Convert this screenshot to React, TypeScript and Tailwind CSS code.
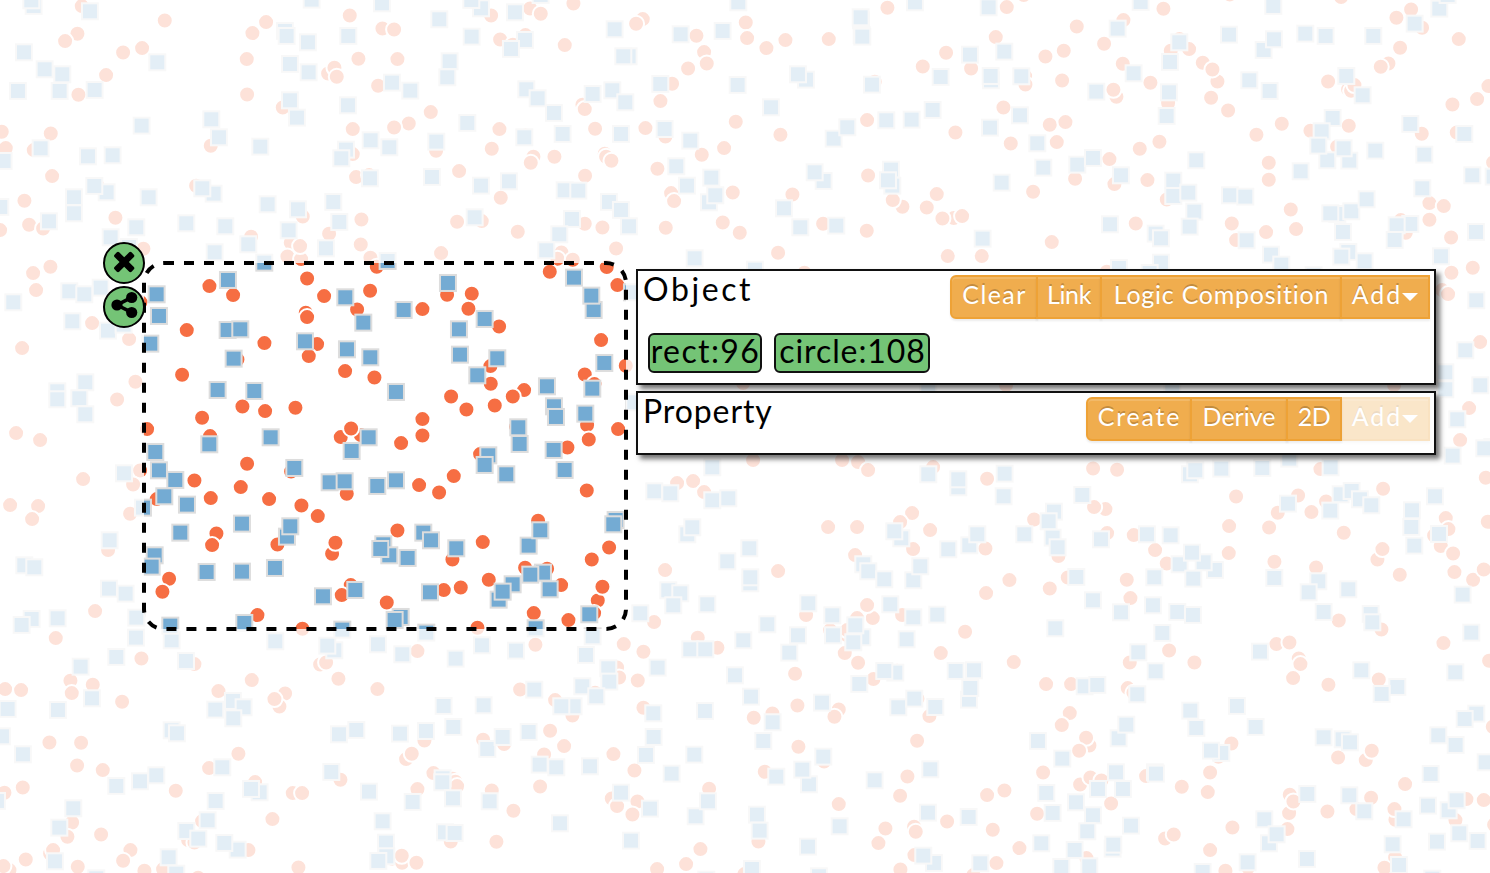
import React from "react";

type Tile = { x: number; y: number; k: number; circles: string; squares: string };

// Marks are grouped by canvas tile: k units per pixel, centre coordinates, painted in order.
const tiles: Tile[] = [
  {
    x: 0, y: 0, k: 3,
    circles:
      "245,18 494,61 232,101 195,123 369,157 426,144 318,225 235,284 757,99 798,66 740,177 741,283 848,322 1049,46 1147,85 1182,88 1075,176 1192,177 984,220 1003,203 1010,230 1134,257 1473,46 1502,118 1292,336 1226,370 1182,382 1058,387 1058,462 1068,531 1107,525 1308,452 1377,513 1475,446 1498,387 1502,593 1371,665 1445,663 5,395 152,400 17,444 101,450 156,528 73,602 87,674 129,685 0,690 346,653 290,553 632,437 588,557 908,649 753,710 987,701 1084,658 1082,733 1111,773 872,728 862,769 903,777 900,738 430,746 1130,800 1323,759 151,800",
    squares:
      "100,17 93,0 269,33 71,156 133,207 186,222 53,272 178,272 283,269 471,186 424,376 633,357 656,411 780,439 263,468 337,465 121,444 10,482 221,591 319,576 282,557 221,639 0,620 146,663 445,591 640,580 606,564 558,669 675,678 408,681 331,711 386,740 802,612 893,627 744,732 643,756 865,690 999,605 1017,665 977,744 934,-2 854,92 859,107 923,126 869,191 925,216 869,300 890,352 1044,107 1043,315 1145,9 1442,24 1413,-1 1317,57 1414,109 1348,183 1341,231 1175,247 1230,271 1401,368 1308,424 1111,420 1167,441 1037,448 1023,474 1109,534 1295,530 1442,556 1423,651 792,787 1162,782",
  },
  {
    x: 500, y: 0, k: 3,
    circles:
      "90,25 122,41 220,10 428,57 408,71 194,135 0,118 76,105 38,134 589,107 612,156 620,190 564,205 516,251 481,303 737,67 741,114 856,120 799,144 986,117 1162,23 1087,47 1268,199 1338,158 1413,205 1487,111 247,314 254,327 285,386 436,384 496,409 76,406 100,470 92,488 163,470 314,461 318,470 334,482 255,527 472,506 605,464 672,444 707,365 841,404 1101,360 1124,245 1366,397 1104,526 513,579 522,603 698,577 877,583 1207,620 1178,600 1310,582 1280,622 1361,654 1327,655 1386,648 668,667 719,698 969,671 1100,692 497,683 307,682 254,671 53,695 348,745 184,757 172,776 218,779 149,815 320,801 834,758 1343,768 1445,768 913,818",
    squares:
      "121,-16 44,36 74,119 32,146 343,87 385,168 369,168 541,102 667,92 714,6 1082,60 1081,51 1084,104 1086,109 1244,6 1465,21 1409,163 1321,230 1472,240 1471,227 78,267 112,294 161,338 277,281 336,270 375,306 187,401 72,411 362,401 480,251 493,386 570,421 712,254 917,238 893,222 812,321 1115,253 1158,360 1234,358 1297,329 1469,382 1000,415 1041,381 528,498 560,556 633,532 26,543 193,570 234,571 326,605 362,629 386,678 215,656 177,702 138,750 626,606 645,585 970,542 943,516 851,624 900,681 1008,676 1172,508 1176,556 1163,540 1447,715 583,774 764,808",
  },
  {
    x: 990, y: 0, k: 3,
    circles:
      "50,21 101,-15 260,79 342,131 166,169 221,152 216,241 105,228 106,253 40,322 179,374 226,366 200,426 62,430 129,575 185,726 255,536 358,477 373,552 398,191 379,290 370,269 481,248 400,60 520,26 719,-17 542,152 568,117 597,147 638,188 682,244 667,208 663,293 714,331 534,309 508,425 449,446 472,540 530,598 437,670 725,670 738,720 828,696 918,687 902,628 836,539 836,488 799,404 875,371 961,392 1076,377 1041,440 1014,244 1074,268 1083,272 1093,255 1195,190 1172,200 1230,143 1219,53 1263,28 1296,83 1406,117 1053,-9 1495,258 1461,297 1387,313 1295,401 1400,397 1509,487 1318,609 1361,618 1318,659 1232,660 1247,698 1383,712 1448,803 1384,818 350,815",
    squares:
      "451,5 382,85 42,154 93,228 89,345 141,429 34,547 159,502 261,493 308,473 392,525 318,274 430,219 567,126 539,185 536,276 529,347 618,480 716,103 820,149 851,117 777,240 838,272 945,100 1006,107 1149,107 849,17 1347,25 1372,-16 1273,70 1068,227 1117,285 1027,353 994,393 1011,480 984,436 1077,481 1060,444 1155,451 931,513 1260,371 1302,463 1422,401 1446,525 1510,529 1296,564 549,541 549,587 594,577 612,634 598,679 719,585 765,589 496,700 512,714 359,672 512,787 386,803 478,818 769,720 842,763 873,793 1041,641 1020,639 1083,633 1129,597 1058,695 1074,755 1053,769 1123,783 1260,671 1219,675 1213,719 1457,695 1352,768 970,825",
  },
  {
    x: 0, y: 620, k: 3,
    circles:
      "167,54 424,115 583,132 211,182 215,219 278,194 15,207 63,210 366,245 148,367 243,368 231,436 308,450 68,502 13,518 216,607 202,650 303,643 150,700 159,690 77,718 28,750 10,738 233,740 391,690 369,722 433,752 489,747 594,773 527,512 627,444 715,401 765,486 878,519 906,519 606,603 564,660 583,667 817,597 745,690 895,742 655,213 755,180 855,220 838,259 823,237 960,133 978,127 1015,176 1132,207 1252,93 907,26 1432,23 1273,361 1218,417 1235,401 1021,479 1252,507 1300,459 1358,476 1366,485 1371,498 1352,664 1449,359 1475,511 1489,665 1177,716 1206,728 1205,707 1249,728",
    squares:
      "94,-4 64,14 172,-6 241,139 348,110 407,52 408,-8 514,60 557,122 275,234 173,269 22,266 5,348 68,402 219,564 177,622 164,723 -10,542 348,497 419,483 468,465 514,330 530,339 645,268 698,242 730,261 699,294 666,441 778,516 752,506 646,542 622,600 558,632 594,655 712,688 672,668 505,711 528,760 288,774 825,63 1002,90 981,76 1133,72 1206,102 1366,115 1445,75 1026,28 1278,37 1330,257 1450,255 1359,320 1277,332 1199,340 1068,329 1016,342 993,455 1106,514 1237,545 1327,474 1326,486 1358,534 1468,543 1461,386 1147,603 1157,667 1158,708 1134,722 1334,636 1363,638",
  },
  {
    x: 500, y: 620, k: 3,
    circles:
      "106,74 462,6 371,72 430,95 593,53 652,83 351,142 357,172 413,181 60,208 165,240 217,286 285,218 430,263 150,332 192,378 132,403 120,499 40,572 12,372 340,402 403,451 335,535 351,558 412,544 397,583 627,506 601,687 558,732 471,747 733,762 761,293 817,280 892,256 885,161 895,380 794,455 972,424 775,664 1016,552 1016,268 1003,290 1034,99 1074,128 990,30 1040,45 1118,-6 1120,177 1191,152 1322,99 1395,35 1252,236 1288,288 1251,362 1222,469 1200,527 1156,625 1135,669 1242,620 1247,635 1341,604 1461,525 1478,629 1243,705 1201,748 1489,729 1420,765",
    squares:
      "277,48 47,91 257,104 106,24 324,144 327,184 246,198 288,228 102,208 220,258 183,258 472,142 459,279 460,350 437,404 85,335 7,350 118,433 168,441 269,438 362,517 449,565 179,609 392,661 570,87 615,87 729,60 704,165 752,229 614,272 582,403 514,460 586,588 623,543 770,583 778,631 755,746 618,778 801,12 893,45 867,97 998,45 1086,51 1059,66 1077,191 1185,157 1152,152 1219,57 1311,-17 1366,152 1421,150 1406,238 1410,203 1194,261 1242,235 1305,260 965,247 817,306 789,362 969,409 828,469 926,492 906,448 1123,480 1290,447 1283,577 1018,618 923,679 1301,728 1269,706 1440,729 1405,590 956,768",
  },
  {
    x: 990, y: 450, k: 3,
    circles:
      "-9,86 -14,295 -12,431 -9,1035 309,55 381,59 738,139 346,177 312,171 132,208 351,249 431,255 495,300 530,340 717,228 716,309 205,318 58,390 233,382 179,415 410,389 421,444 71,636 419,637 537,601 613,637 168,702 243,702 413,714 430,728 239,789 215,825 298,886 288,863 267,902 159,967 270,1003 301,982 334,991 43,1021 141,1091 363,1060 468,978 575,1010 88,1194 289,1224 525,1165 551,1153 660,1200 706,1262 727,1132 653,1026 660,967 685,920 724,880 774,1252 991,57 924,136 863,188 837,232 964,186 1008,154 1179,116 1061,248 853,335 978,352 1162,328 1177,297 1229,374 1367,204 1332,256 1375,237 1352,288 1389,310 1393,366 1449,389 1481,358 1487,83 1493,215 1046,511 1174,538 859,582 898,577 926,625 931,642 909,684 1015,704 1166,688 1360,579 1497,632 1508,830 1044,922 1127,930 1145,902 1245,1002 1143,1043 899,1034 897,1089 910,1054 892,1137 1012,1084 1099,1077 1216,1109 1213,1077 1429,1047 1481,1050 1396,1110 1512,1124 1215,1222 1183,1253",
    squares:
      "43,70 40,138 276,134 191,184 175,213 102,252 187,262 202,291 332,267 258,380 308,450 392,486 195,534 470,252 541,255 568,342 674,359 640,336 605,307 609,385 492,381 488,465 561,485 608,494 516,548 444,606 496,663 283,708 321,704 441,732 599,72 615,60 693,55 816,53 897,25 1021,51 893,160 1051,132 1084,122 1109,147 1143,165 1020,181 1387,16 1334,138 1265,180 1263,230 1346,251 1272,286 1417,433 852,383 984,393 955,426 1000,485 1074,417 1141,491 1146,516 1443,547 809,604 1113,660 1395,666 1221,710 1174,731 600,781 618,833 740,767 796,830 385,864 408,823 143,872 216,925 377,966 323,1016 398,1016 168,1028 257,1056 187,1088 308,1095 291,1143 422,1126 153,1179 253,1199 367,1195 369,1183 213,1250 297,1248 494,966 497,970 693,908 662,901 1000,861 1057,867 1079,876 951,1031 1077,1035 1122,1083 1240,1107 822,1107 836,1179 859,1152 950,1226 772,1236 637,1265 1207,1182 1226,1244 1458,790 1423,806 1344,855 1396,884 1486,936 1321,971 1313,1066 1375,1080 1399,1050 1407,1149 1340,1174 1462,1172 1326,1285 1506,-10",
  },
  {
    x: 95, y: 235, k: 3,
    circles:
      "343,153 414,180 636,130 687,183 825,167 786,223 632,233 636,246 275,285 508,324 666,327 641,363 750,408 838,427 261,419 427,373 442,514 510,528 601,518 321,548 345,603 156,582 737,606 797,600 768,580 136,201 121,440 66,493 102,312",
    squares:
      "398,134 184,177 191,242 165,325 397,284 435,282 415,370 367,464 477,467 629,318 750,186 804,262 755,342 825,366 38,286 16,157 85,268 526,606 820,606",
  },
  {
    x: 365, y: 250, k: 3,
    circles:
      "246,134 320,131 310,176 172,177 402,229 376,348 377,401 477,420 443,439 389,466 304,478 258,439 172,507 172,556 108,579 757,105 708,270 782,347 659,373 688,402 666,525 671,568 759,537 607,592 345,612 453,530",
    squares:
      "115,179 248,98 358,206 281,237 284,313 336,375 396,324 92,425 626,82 685,179 678,136 717,338 681,415 545,408 566,468 572,500 660,490 459,531 463,581 565,599 800,126",
  },
  {
    x: 95, y: 430, k: 3,
    circles:
      "456,101 298,151 437,171 347,204 522,207 619,226 668,258 588,124 185,207 186,65 364,310 351,345 547,343 755,191 711,371 721,338 222,446 202,485 487,555 767,465 740,495 135,121 114,163 105,251 39,360",
    squares:
      "342,42 180,65 191,120 240,149 207,198 275,223 255,307 440,280 575,319 585,288 334,425 440,424 539,413 597,113 769,62 703,156 748,153 846,167 178,375 169,409 683,498 780,479 225,586 447,578 43,330 41,475 91,490 86,129 143,232",
  },
  {
    x: 365, y: 430, k: 3,
    circles:
      "266,138 162,165 222,187 97,301 353,336 262,388 371,449 236,480 287,472 65,517 519,272 480,413 546,416 588,465 506,549 610,570 665,181 732,352 680,388 698,511 712,470 687,549",
    squares:
      "92,150 369,75 358,104 423,132 598,119 54,342 72,375 45,356 127,383 174,307 197,330 273,354 490,346 525,300 442,462 400,508 412,484 533,427 495,433 553,477 194,486 106,560 88,569 751,269 744,282 672,552",
  },
  {
    x: 0, y: 0, k: 1,
    circles:
      "36,290 33,273 92,323 22,348 16,433 40,440 10,505 38,506 32,519 95,611 83,479 743,383 1006,385 1394,385 753,460 842,460 858,462 868,470 933,467 677,483 693,481 704,492 828,527 857,527 855,555 912,513 900,522 930,530 778,571 913,549 986,593 665,570 806,615 867,605 902,615 857,618 847,630 1442,290 1448,294 1480,342 1469,408 1460,440",
    squares:
      "13,302 69,291 84,294 72,321 57,391 57,399 85,382 79,398 85,414 24,565 34,567 928,388 1172,390 634,402 712,467 928,474 958,487 958,479 654,491 670,493 712,500 728,498 687,534 692,527 901,538 894,531 749,548 727,561 750,583 750,577 668,590 680,593 673,605 707,604 640,613 808,603 863,564 868,571 884,579 913,580 920,566 948,549 969,545 977,534 890,604 913,617 832,615 855,625 1445,372 1445,389 1476,300 1465,350 1480,385 1457,419 1484,448",
  },
];

const place = (t: Tile, list: string, shift: number) =>
  list.split(" ").map((pair) => {
    const [a, b] = pair.split(",").map(Number);
    return [t.x + a / t.k + shift, t.y + b / t.k + shift];
  });

const circles = tiles.flatMap((t) => place(t, t.circles, 0.1));
const squares = tiles.flatMap((t) => place(t, t.squares, 0.3));

function Canvas() {
  return (
    <svg className="absolute inset-0" width="1490" height="873" viewBox="0 0 1490 873">
      <g fill="#f66e43" stroke="#fff" strokeWidth="2">
        {circles.map(([x, y], i) => (
          <circle key={i} cx={x} cy={y} r="8" />
        ))}
      </g>
      <g fill="#74abd3" stroke="#ddd" strokeWidth="2">
        {squares.map(([x, y], i) => (
          <rect key={i} x={x - 8} y={y - 8} width="16" height="16" />
        ))}
      </g>
      <path
        fill="#fff"
        fillOpacity="0.8"
        fillRule="evenodd"
        d="M0 0H1490V873H0ZM164 263H606A20 20 0 0 1 626 283V609A20 20 0 0 1 606 629H164A20 20 0 0 1 144 609V283A20 20 0 0 1 164 263Z"
      />
      <rect x="144" y="263" width="482" height="366" rx="20" fill="none" stroke="#000" strokeWidth="4" strokeDasharray="10 10" />
    </svg>
  );
}

function RoundButton({ label, children }: { label: string; children: React.ReactNode }) {
  return (
    <button aria-label={label} className="block size-[42px] rounded-full border-2 border-black bg-[#74c476]">
      <svg width="38" height="38" viewBox="0 0 38 38">
        {children}
      </svg>
    </button>
  );
}

const buttonBase =
  "relative flex h-11 justify-center border-2 border-[#eea236] bg-[#f0ad4e] pt-[1px] text-[25px] leading-[32px] text-white shadow-[inset_0_2px_0_rgba(255,255,255,0.15),0_2px_2px_rgba(0,0,0,0.075)] [text-shadow:0_-2px_0_rgba(0,0,0,0.2)] whitespace-nowrap ";

function Btn({ className, children }: { className: string; children: React.ReactNode }) {
  return <button className={buttonBase + className}>{children}</button>;
}

function Caret() {
  return <span className="mt-[15px] h-0 w-0 border-x-8 border-t-8 border-x-transparent border-t-white" />;
}

const panel = "w-[800px] border-2 border-[#111] bg-white shadow-[4px_4px_5px_rgba(0,0,0,0.55)] ";
const tag = "flex h-10 items-center justify-center rounded-md border-2 border-[#111] bg-[#74c476] pb-1 text-[32px] leading-none ";

export default function App() {
  return (
    <div className="relative h-[873px] w-[1490px] overflow-hidden bg-white font-['Century_Gothic','URW_Gothic','Lato',sans-serif] text-black">
      <Canvas />
      <div className="absolute left-[103px] top-[242px] flex flex-col gap-[2px]">
        <RoundButton label="Close">
          <path
            transform="translate(19.2 18) scale(0.0171) translate(-896 -960)"
            d="M1490 1322q0 40-28 68l-136 136q-28 28-68 28t-68-28l-294-294-294 294q-28 28-68 28t-68-28l-136-136q-28-28-28-68t28-68l294-294-294-294q-28-28-28-68t28-68l136-136q28-28 68-28t68 28l294 294 294-294q28-28 68-28t68 28l136 136q28 28 28 68t-28 68l-294 294 294 294q28 28 28 68z"
          />
        </RoundButton>
        <RoundButton label="Share">
          <path d="M26.7 9.3L12 17L26.7 24.3" fill="none" stroke="#000" strokeWidth="3.6" />
          <circle cx="12" cy="17" r="5.6" />
          <circle cx="26.7" cy="9.5" r="5.6" />
          <circle cx="26.7" cy="24.5" r="5.6" />
        </RoundButton>
      </div>

      <div className="absolute left-[636px] top-[269px] flex flex-col gap-[6px]">
        <section className={panel + "h-[116px]"}>
          <header className="flex items-start justify-between pl-[5px] pr-1 pt-1">
            <h2 className="-mt-[2px] text-[32px] leading-[32px] tracking-[2.6px]">Object</h2>
            <div className="flex">
              <Btn className="w-[88px] rounded-l-[6px] pl-[1px] tracking-[1.4px]">Clear</Btn>
              <Btn className="-ml-[2px] w-[66px] tracking-[-0.4px]">Link</Btn>
              <Btn className="-ml-[2px] w-[242px] pl-[1px] tracking-[0.75px]">Logic Composition</Btn>
              <Btn className="-ml-[2px] w-[90px] tracking-[2px]">
                Add
                <Caret />
              </Btn>
            </div>
          </header>
          <div className="flex gap-3 pl-[10px] pt-[14px]">
            <div className={tag + "w-[114px] pl-[1px] tracking-[1.4px]"}>rect:96</div>
            <div className={tag + "w-[156px] pl-[1px] tracking-[0.9px]"}>circle:108</div>
          </div>
        </section>
        <section className={panel + "h-16"}>
          <header className="flex items-start justify-between pl-[5px] pr-1 pt-1">
            <h2 className="-mt-[2px] text-[32px] leading-[32px] tracking-[0.9px]">Property</h2>
            <div className="flex">
              <Btn className="w-[106px] rounded-l-[6px] pl-[1px] tracking-[1.8px]">Create</Btn>
              <Btn className="-ml-[2px] w-[98px]">Derive</Btn>
              <Btn className="-ml-[2px] w-[56px] tracking-[-0.5px]">2D</Btn>
              <Btn className="w-[88px] border-l-0 tracking-[2px] opacity-30">
                Add
                <Caret />
              </Btn>
            </div>
          </header>
        </section>
      </div>
    </div>
  );
}
